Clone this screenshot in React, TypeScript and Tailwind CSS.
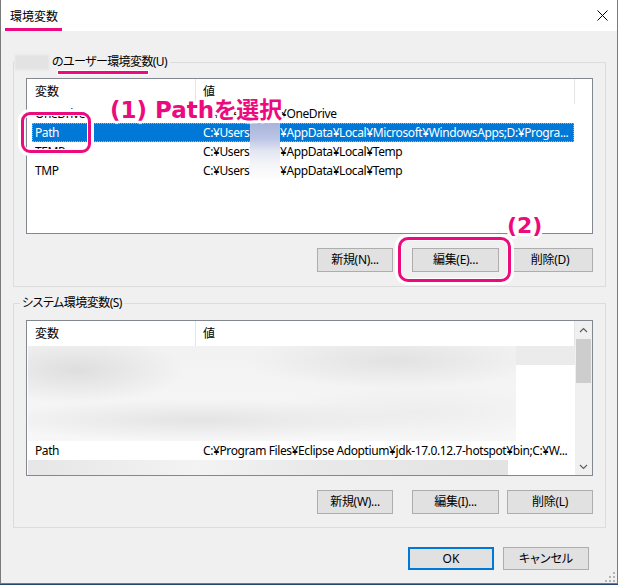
import React from "react";

type RowData = { name: string; pre: string; post: string; selected?: boolean };

const userRows: RowData[] = [
  { name: "OneDrive", pre: "C:¥Users¥", post: "¥OneDrive" },
  {
    name: "Path",
    pre: "C:¥Users¥",
    post: "¥AppData¥Local¥Microsoft¥WindowsApps;D:¥Progra...",
    selected: true,
  },
  { name: "TEMP", pre: "C:¥Users¥", post: "¥AppData¥Local¥Temp" },
  { name: "TMP", pre: "C:¥Users¥", post: "¥AppData¥Local¥Temp" },
];

function Btn({ label, className = "" }: { label: string; className?: string }) {
  return (
    <button
      className={`flex h-[24px] items-center justify-center border border-[#adadad] bg-[#e1e1e1] text-[12px] leading-4 tracking-[-0.3px] text-black ${className}`}
    >
      {label}
    </button>
  );
}

function ListHeader() {
  return (
    <div className="flex h-[25px] shrink-0 text-[12px] leading-4 text-black">
      <div className="flex w-[168px] items-center pl-[8px]">変数</div>
      <div className="w-px bg-[#e5e5e5]" />
      <div className="flex w-[378px] items-center pl-[7px]">値</div>
      <div className="w-px bg-[#e5e5e5]" />
    </div>
  );
}

function Row({ row }: { row: RowData }) {
  return (
    <div className="flex h-[19px] shrink-0 pl-[5px] text-[12px] leading-4 tracking-[-0.4px]">
      <div
        className={`flex w-[542px] items-center ${
          row.selected
            ? "bg-[#0078d7] text-white outline-1 -outline-offset-1 outline-dotted outline-[#f5a43a]"
            : "text-black"
        }`}
      >
        <div className="w-[168px] pl-[3px]">{row.name}</div>
        <div className="flex flex-1 overflow-hidden whitespace-nowrap pl-[3px]">
          <span className="inline-block w-[77px] shrink-0 overflow-hidden">{row.pre}</span>
          <span>{row.post}</span>
        </div>
      </div>
    </div>
  );
}

function Chevron({ down }: { down?: boolean }) {
  return (
    <svg width="9" height="6" viewBox="0 0 9 6" className={down ? "rotate-180" : ""}>
      <path d="M1 5 L4.5 1.5 L8 5" fill="none" stroke="#606060" strokeWidth="1.2" />
    </svg>
  );
}

const halo =
  "[text-shadow:2px_0_0_#fff,-2px_0_0_#fff,0_2px_0_#fff,0_-2px_0_#fff,2px_2px_0_#fff,-2px_-2px_0_#fff,2px_-2px_0_#fff,-2px_2px_0_#fff,3px_0_1px_#fff,-3px_0_1px_#fff,0_3px_1px_#fff,0_-3px_1px_#fff]";

export default function App() {
  return (
    <div className="relative h-[585px] w-[618px] overflow-hidden bg-[#23476e] font-['Noto_Sans','Noto_Sans_CJK_JP',sans-serif] [font-feature-settings:'palt']">
      {/* window */}
      <div className="flex h-[584px] w-[618px] flex-col border-x border-b border-[#7a7a7a] bg-[#f0f0f0]">
        <div className="flex h-[31px] shrink-0 items-start justify-between bg-white">
          <div className="pl-[9px] pt-[9px] text-[12px] leading-4 text-black">環境変数</div>
          <svg width="11" height="11" viewBox="0 0 11 11" className="mr-[9px] mt-[10px]">
            <path d="M0.5 0.5 L10.5 10.5 M10.5 0.5 L0.5 10.5" stroke="#000" strokeWidth="1" />
          </svg>
        </div>

        {/* user variables */}
        <div className="ml-[12px] mr-[11px] mt-[31px] flex h-[225px] flex-col border border-[#dcdcdc]">
          <div className="-mt-[9px] ml-[1px] flex h-[16px] w-fit items-center bg-[#f0f0f0] pr-[3px] text-[12px] leading-4 tracking-[-0.6px] text-black">
            <span className="mr-[3px] inline-block h-[15px] w-[34px] bg-[#e3e3e3] blur-[1px]" />
            のユーザー環境変数(U)
          </div>
          <div className="mx-[12px] mt-[8px] flex h-[156px] flex-col border border-[#828790] bg-white">
            <ListHeader />
            {userRows.map((r) => (
              <Row key={r.name} row={r} />
            ))}
          </div>
          <div className="mr-[12px] mt-[14px] flex justify-end">
            <Btn label="新規(N)..." className="w-[76px]" />
            <Btn label="編集(E)..." className="ml-[19px] w-[87px]" />
            <Btn label="削除(D)" className="ml-[8px] w-[86px]" />
          </div>
        </div>

        {/* system variables */}
        <div className="ml-[12px] mr-[11px] mt-[16px] flex h-[225px] flex-col border border-[#dcdcdc]">
          <div className="-mt-[9px] ml-[6px] flex h-[16px] w-fit items-center bg-[#f0f0f0] px-[2px] text-[12px] leading-4 tracking-[-0.5px] text-black">
            システム環境変数(S)
          </div>
          <div className="mx-[12px] mt-[9px] flex h-[156px] border border-[#828790] bg-white">
            <div className="flex w-[548px] flex-col">
              <ListHeader />
              <div className="flex h-[95px] shrink-0">
                <div className="ml-[1px] h-full w-[488px] bg-[radial-gradient(ellipse_22%_35%_at_10%_25%,#dedede,transparent),radial-gradient(ellipse_30%_30%_at_75%_15%,#e2e2e2,transparent),radial-gradient(ellipse_45%_22%_at_35%_78%,#e4e4e4,transparent),radial-gradient(ellipse_30%_30%_at_80%_70%,#ededed,transparent),linear-gradient(#f2f2f2,#f7f7f7)]" />
                <div className="flex-1">
                  <div className="h-[19px] bg-[#ebebeb]" />
                </div>
              </div>
              <div className="flex h-[19px] shrink-0 pl-[5px] text-[12px] leading-4 tracking-[-0.4px] text-black">
                <div className="flex w-[542px] items-center">
                  <div className="w-[168px] pl-[3px]">Path</div>
                  <div className="flex-1 overflow-hidden whitespace-nowrap pl-[3px]">
                    C:¥Program Files¥Eclipse Adoptium¥jdk-17.0.12.7-hotspot¥bin;C:¥W...
                  </div>
                </div>
              </div>
              <div className="ml-[1px] h-[15px] w-[480px] bg-[linear-gradient(90deg,#e6e6e6,#f3f3f3_35%,#e9e9e9_60%,#e3e3e3)]" />
            </div>
            <div className="flex w-[17px] flex-col items-center bg-[#f0f0f0]">
              <div className="flex h-[17px] w-full items-center justify-center">
                <Chevron />
              </div>
              <div className="mt-[1px] h-[44px] w-[15px] bg-[#cdcdcd]" />
              <div className="flex-1" />
              <div className="flex h-[17px] w-full items-center justify-center">
                <Chevron down />
              </div>
            </div>
          </div>
          <div className="mr-[12px] mt-[14px] flex justify-end">
            <Btn label="新規(W)..." className="w-[76px]" />
            <Btn label="編集(I)..." className="ml-[19px] w-[87px]" />
            <Btn label="削除(L)" className="ml-[8px] w-[86px]" />
          </div>
        </div>

        <div className="mr-[28px] mt-[19px] flex justify-end gap-[9px]">
          <button className="flex h-[23px] w-[86px] items-center justify-center border-2 border-[#0078d7] bg-[#e1e1e1] text-[12px] leading-4 text-black">
            OK
          </button>
          <button className="flex h-[23px] w-[86px] items-center justify-center border border-[#adadad] bg-[#e1e1e1] text-[12px] leading-4 text-black">
            キャンセル
          </button>
        </div>
      </div>

      {/* resize grip */}
      <svg width="10" height="10" viewBox="0 0 10 10" className="absolute bottom-[3px] right-[3px]">
        <g fill="#b4b4b4">
          <rect x="8" y="0" width="2" height="2" />
          <rect x="4" y="4" width="2" height="2" />
          <rect x="8" y="4" width="2" height="2" />
          <rect x="0" y="8" width="2" height="2" />
          <rect x="4" y="8" width="2" height="2" />
          <rect x="8" y="8" width="2" height="2" />
        </g>
      </svg>

      {/* blurred user name in list values */}
      <div className="absolute left-[250px] top-[123px] h-[56px] w-[30px] bg-[linear-gradient(180deg,#a8b4dc_0%,#bcc5e4_28%,#e2e6f2_50%,#f5f6f9_75%,#fdfdfd_100%)]" />

      {/* annotations */}
      <div className="absolute left-[5px] top-[28px] h-[3px] w-[57px] bg-[#ec0a7e]" />
      <div className="absolute left-[58px] top-[71px] h-[3px] w-[90px] bg-[#ec0a7e] shadow-[0_0_0_1px_#fff]" />
      <div className="absolute left-[21px] top-[112px] h-[41px] w-[70px] rounded-[9px] border-[3px] border-[#ec0a7e] shadow-[0_0_0_3px_#fff,inset_0_0_0_1px_#fff]" />
      <div className="absolute left-[398px] top-[237px] h-[45px] w-[113px] rounded-[10px] border-[3px] border-[#ec0a7e] shadow-[0_0_0_3px_#fff,inset_0_0_0_1px_#fff]" />
      <div className={`absolute left-[110px] top-[97px] whitespace-nowrap font-['DejaVu_Sans','Noto_Sans_CJK_JP',sans-serif] text-[23px] font-bold leading-[27px] text-[#ec0a7e] ${halo}`}>
        (1) Pathを選択
      </div>
      <div className={`absolute left-[507px] top-[213px] whitespace-nowrap font-['DejaVu_Sans',sans-serif] text-[22px] font-bold leading-[26px] text-[#ec0a7e] ${halo}`}>
        (2)
      </div>
    </div>
  );
}
